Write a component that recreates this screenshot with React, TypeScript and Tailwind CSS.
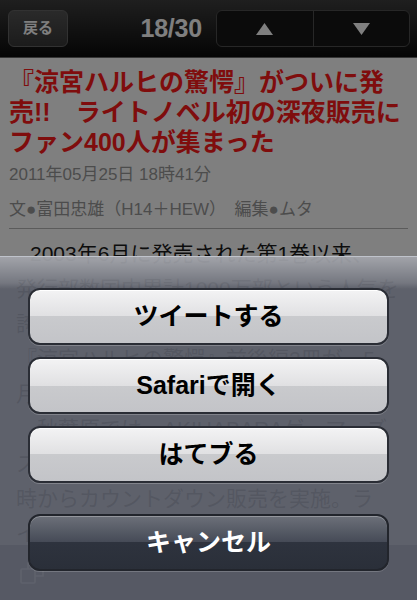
import React from "react";

const bodyLines = [
  "2003年6月に発売された第1巻以来、",
  "発行部数国内累計1000万部という人気を",
  "誇る『涼宮ハルヒ』シリーズの最新刊",
  "『涼宮ハルヒの驚愕』前後編2冊が、5",
  "月25日についに発売された。",
  "　秋葉原では、AKIHABARAゲーマーズ",
  "ストアとアニメイト秋葉原店にて25日0",
  "時からカウントダウン販売を実施。ラ",
  "イトノベルとしては異例の深夜販売に",
];

const sheetActions = ["ツイートする", "Safariで開く", "はてブる"];

function Arrow({ up }: { up?: boolean }) {
  return (
    <svg width="17" height="12" viewBox="0 0 17 12" className="block">
      {up ? <path d="M8.5 0 L17 12 L0 12 Z" fill="#ffffff" /> : <path d="M0 0 L17 0 L8.5 12 Z" fill="#ffffff" />}
    </svg>
  );
}

export default function App() {
  return (
    <div className="relative w-[417px] h-[600px] overflow-hidden bg-white font-[family-name:'Liberation_Sans','Noto_Sans_CJK_JP',sans-serif]">
      {/* Top navigation bar */}
      <header className="flex items-center h-[58px] px-[8px] pr-[7px] bg-[linear-gradient(to_bottom,#3e3e3e,#0a0a0a)] border-b border-[#6a6a6a]">
        <button className="w-[60px] h-[37px] rounded-[6px] bg-[linear-gradient(to_bottom,#545454,#383838)] border border-[#646464] text-white text-[15px] font-bold">
          戻る
        </button>
        <div className="flex-1" />
        <span className="text-white text-[25px] font-bold tracking-[-0.2px]">18/30</span>
        <div className="ml-[14px] flex w-[194px] h-[37px] rounded-[6px] border border-[#4e4e4e] bg-[#161616]">
          <button className="flex-1 flex items-center justify-center border-r border-[#4e4e4e]">
            <Arrow up />
          </button>
          <button className="flex-1 flex items-center justify-center">
            <Arrow />
          </button>
        </div>
      </header>

      {/* Article */}
      <article className="pt-[9px]">
        <h1 className="px-[9px] text-[25px] leading-[30px] font-bold text-[#ff1a1a] whitespace-nowrap">
          『涼宮ハルヒの驚愕』がついに発
          <br />
          売!!　ライトノベル初の深夜販売に
          <br />
          ファン400人が集まった
        </h1>
        <p className="px-[9px] mt-[8px] text-[17px] leading-[20px] text-[#999999]">2011年05月25日 18時41分</p>
        <p className="px-[9px] mt-[15px] text-[17px] leading-[20px] text-[#999999]">文●富田忠雄（H14＋HEW）　編集●ムタ</p>
        <div className="mx-[9px] mt-[8px] border-t border-[#b6b6b6]" />
        <div className="pt-[7px] px-[16px] text-[21px] leading-[35px] text-[#1a1a1a] whitespace-nowrap">
          {bodyLines.map((line, i) => (
            <p key={i} className={i === 0 ? "indent-[14px]" : ""}>
              {line}
            </p>
          ))}
        </div>
      </article>

      {/* Bottom toolbar */}
      <div className="absolute left-0 right-0 bottom-0 h-[55px] flex items-center px-[20px] bg-[#50545c]">
        <svg width="24" height="22" viewBox="0 0 24 22" fill="none" stroke="#ffffff" strokeWidth="1.6">
          <rect x="1" y="7" width="14" height="14" rx="1" />
          <path d="M8 7 V1 H23 V14 H15" />
        </svg>
      </div>

      {/* Dimming layer behind the action sheet */}
      <div className="absolute inset-0 bg-black/50" />

      {/* Action sheet */}
      <div className="absolute left-0 right-0 bottom-0 h-[344px] border-t border-[#bfc3cb] bg-[rgba(91,94,106,0.91)] bg-[linear-gradient(to_bottom,rgba(255,255,255,0.42),rgba(255,255,255,0.14)_26px,rgba(255,255,255,0)_32px)] px-[28px] pt-[31px]">
        <div className="flex flex-col gap-[12px]">
          {sheetActions.map((label) => (
            <button
              key={label}
              className="h-[57px] rounded-[12px] border-2 border-[#2a2d35] bg-[linear-gradient(to_bottom,#f3f3f4_0%,#e0e0e2_50%,#c9cacd_50%,#c3c4c8_100%)] shadow-[inset_0_1px_0_#ffffff,0_1px_0_rgba(255,255,255,0.22)] text-[25px] font-bold text-black"
            >
              {label}
            </button>
          ))}
        </div>
        <button className="mt-[31px] w-full h-[57px] rounded-[12px] border-2 border-[#22252c] bg-[linear-gradient(to_bottom,#6c7079_0%,#454a56_50%,#2e333e_50%,#2a2f39_100%)] shadow-[inset_0_1px_0_rgba(255,255,255,0.28),0_1px_0_rgba(255,255,255,0.18)] text-[25px] font-bold text-white">
          キャンセル
        </button>
      </div>
    </div>
  );
}
